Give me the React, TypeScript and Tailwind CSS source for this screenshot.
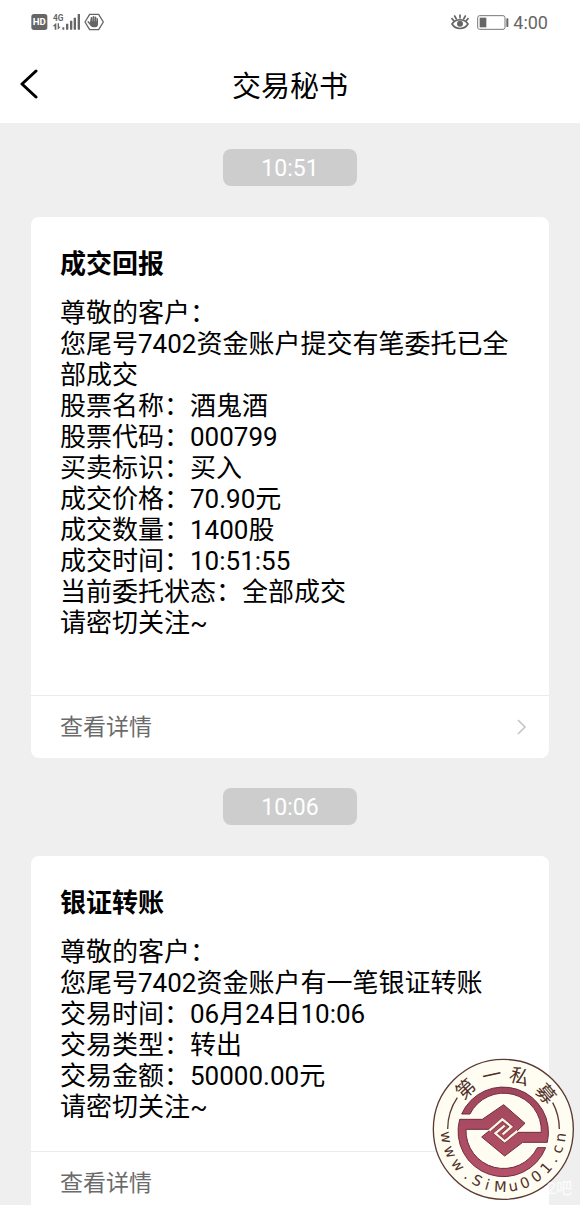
import type { ReactNode } from "react";

type Message = {
  time: string;
  title: string;
  lines: string[];
  bodyClass: string;
};

const messages: Message[] = [
  {
    time: "10:51",
    title: "成交回报",
    lines: [
      "尊敬的客户：",
      "您尾号7402资金账户提交有笔委托已全部成交",
      "股票名称：酒鬼酒",
      "股票代码：000799",
      "买卖标识：买入",
      "成交价格：70.90元",
      "成交数量：1400股",
      "成交时间：10:51:55",
      "当前委托状态：全部成交",
      "请密切关注~",
    ],
    bodyClass: "pb-14",
  },
  {
    time: "10:06",
    title: "银证转账",
    lines: [
      "尊敬的客户：",
      "您尾号7402资金账户有一笔银证转账",
      "交易时间：06月24日10:06",
      "交易类型：转出",
      "交易金额：50000.00元",
      "请密切关注~",
    ],
    bodyClass: "pb-7",
  },
];

function SignalIcons() {
  return (
    <svg viewBox="0 0 222 60" className="h-5 w-[74px]" fill="#666" aria-hidden="true">
      <rect x="1" y="6" width="48" height="48" rx="8" />
      <text x="25" y="40" fontSize="29" fontWeight="700" textAnchor="middle" fill="#fff">HD</text>
      <text x="66" y="26" fontSize="25" fontWeight="700">4G</text>
      <path d="M74 34l-9 9h6v10h5V34zM80 34v19l9-9h-5V34z" />
      <rect x="94" y="46" width="6" height="7" rx="1" />
      <rect x="105" y="35" width="7" height="18" rx="1" />
      <rect x="117" y="26" width="7" height="27" rx="1" />
      <rect x="128" y="17" width="7" height="36" rx="1" />
      <rect x="140" y="6" width="7" height="47" rx="1" />
      <path d="M176 7h27l14 23-14 23h-27l-14-23z" fill="none" stroke="#666" strokeWidth="4" strokeLinejoin="round" />
      <path d="M177 32l-4-4c-2-2-5 1-3 3l10 12c2 2 4 3 7 3h5c6 0 9-4 9-9V20c0-3-4-3-4 0v8h-1V16c0-3-5-3-5 0v12h-1V14c0-3-5-3-5 0v14h-1V17c0-3-5-3-5 0z" />
    </svg>
  );
}

function EyeIcon() {
  return (
    <svg viewBox="0 0 54 48" className="h-4 w-[18px]" fill="none" stroke="#666" strokeWidth="5" strokeLinecap="round" aria-hidden="true">
      <path d="M3 30C14 13 40 13 51 30C40 48 14 48 3 30z" />
      <circle cx="27" cy="29" r="9" fill="#666" stroke="none" />
      <path d="M27 3v9M11 6l5 9M43 6l-5 9M3 14l6 7M51 14l-6 7" />
    </svg>
  );
}

function BatteryIcon() {
  return (
    <svg viewBox="0 0 96 45" className="h-[15px] w-8" aria-hidden="true">
      <rect x="2" y="2" width="82" height="41" rx="6" fill="none" stroke="#777" strokeWidth="3" />
      <rect x="8" y="8" width="20" height="29" fill="#666" />
      <rect x="88" y="10" width="6" height="26" rx="2" fill="#666" />
    </svg>
  );
}

function Glyph({ angle, radius, children }: { angle: number; radius: number; children: ReactNode }) {
  return (
    <text x="235" y={238 + radius} textAnchor="middle" transform={`rotate(${angle} 235 238)`}>
      {children}
    </text>
  );
}

const siteGlyphs: [string, number][] = [
  ["w", 82], ["w", 67], ["w", 52], [".", 38], ["S", 27], ["i", 16], ["M", 3],
  ["u", -10], ["0", -22], ["0", -35], ["1", -48], [".", -59], ["c", -70], ["n", -82],
];

const nameGlyphs: [string, number][] = [["第", -43], ["一", -12], ["私", 17], ["募", 50]];

function Seal() {
  return (
    <svg viewBox="0 0 465 465" className="h-[155px] w-[155px]" role="img" aria-label="第一私募 www.SiMu001.cn">
      <defs>
        <linearGradient id="seal-red" x1="0" y1="0" x2="0" y2="1">
          <stop offset="0" stopColor="#a0465c" />
          <stop offset="1" stopColor="#b55269" />
        </linearGradient>
      </defs>
      <circle cx="235" cy="238" r="210" fill="#fffdf1" stroke="#5b3a33" strokeWidth="4" />
      <g fill="none" stroke="#5b3a33" strokeWidth="4">
        <path d="M68 237A168 168 0 0 1 97 143" />
        <path d="M403 237A168 168 0 0 0 383 158" />
      </g>
      <g transform="translate(90 90)">
        <path
          d="M20 102A136 136 0 0 1 277 187H203L149 228L80 171L108 148H33A113 113 0 0 0 247 203H272A136 136 0 0 1 14 118H82L146 74L210 130L182 157H259A113 113 0 0 0 45 102z"
          fill="url(#seal-red)"
          stroke="#6f2c3f"
          strokeWidth="3"
        />
        <g fill="none" strokeLinejoin="miter">
          <path d="M106 150L142 118L169 140L144 162M184 155L149 184L121 160L148 138" stroke="#6f2c3f" strokeWidth="10" />
          <path d="M103 152L142 118L169 140L143 163M187 153L149 184L121 160L149 137" stroke="#fff4df" strokeWidth="7" />
        </g>
      </g>
      <g fill="#4f3029" fontSize="44" className="font-['DejaVu_Sans',sans-serif]">
        {siteGlyphs.map(([char, angle], i) => (
          <Glyph key={i} angle={angle} radius={188}>{char}</Glyph>
        ))}
      </g>
      <g fill="#4f3029" fontSize="58" className="font-['Noto_Sans_CJK_SC',sans-serif]">
        {nameGlyphs.map(([char, angle]) => (
          <Glyph key={char} angle={angle} radius={-145}>{char}</Glyph>
        ))}
      </g>
    </svg>
  );
}

function MessageCard({ message }: { message: Message }) {
  return (
    <section className="flex flex-col items-center gap-[31px]">
      <time className="flex h-[37px] w-[134px] items-center justify-center rounded-lg bg-[#cdcdcd] pt-1 text-[23px] text-white">
        {message.time}
      </time>
      <article className="w-full rounded-lg bg-white">
        <div className={`px-[29px] pt-7 ${message.bodyClass}`}>
          <h2 className="text-[26px] leading-[38px] font-bold">{message.title}</h2>
          <div className="mt-[15px] text-[26px] leading-[31px]">
            {message.lines.map((line) => (
              <p key={line}>{line}</p>
            ))}
          </div>
        </div>
        <a href="#detail" className="flex h-[63px] items-center justify-between border-t border-[#ebebeb] pr-[22px] pl-[29px] text-[23px] text-[#6b6b6b]">
          <span className="pt-0.5">查看详情</span>
          <svg viewBox="0 0 10 16" className="h-4 w-2.5" fill="none" stroke="#c4c4c4" strokeWidth="1.6" aria-hidden="true">
            <path d="M1 1l7 7-7 7" />
          </svg>
        </a>
      </article>
    </section>
  );
}

export default function App() {
  return (
    <div className="relative flex h-screen flex-col overflow-hidden bg-[#efefef] font-['Roboto','Noto_Sans_CJK_SC',sans-serif] text-black">
      <div className="flex h-11 shrink-0 items-center justify-between bg-white pr-8 pl-[31px]">
        <SignalIcons />
        <div className="flex items-center text-[18px] text-[#666]">
          <EyeIcon />
          <span className="mr-1 ml-2">
            <BatteryIcon />
          </span>
          <span>4:00</span>
        </div>
      </div>
      <header className="grid h-[79px] shrink-0 grid-cols-[1fr_auto_1fr] items-center bg-white px-5">
        <button type="button" aria-label="返回" className="justify-self-start">
          <svg viewBox="0 0 18 30" className="h-[30px] w-[18px]" fill="none" stroke="#000" strokeWidth="3" strokeLinecap="round" strokeLinejoin="round">
            <path d="M16 2L2 15l14 13" />
          </svg>
        </button>
        <h1 className="pt-1.5 text-[29px] leading-10">交易秘书</h1>
      </header>
      <main className="flex min-h-0 flex-1 flex-col gap-[30px] overflow-y-auto px-[31px] pt-[26px] [scrollbar-width:none]">
        {messages.map((message) => (
          <MessageCard key={message.time} message={message} />
        ))}
      </main>
      <div className="pointer-events-none absolute right-0 bottom-0">
        <Seal />
        <span className="absolute right-2 bottom-1 text-[16px] text-white/80">2吧</span>
      </div>
    </div>
  );
}
